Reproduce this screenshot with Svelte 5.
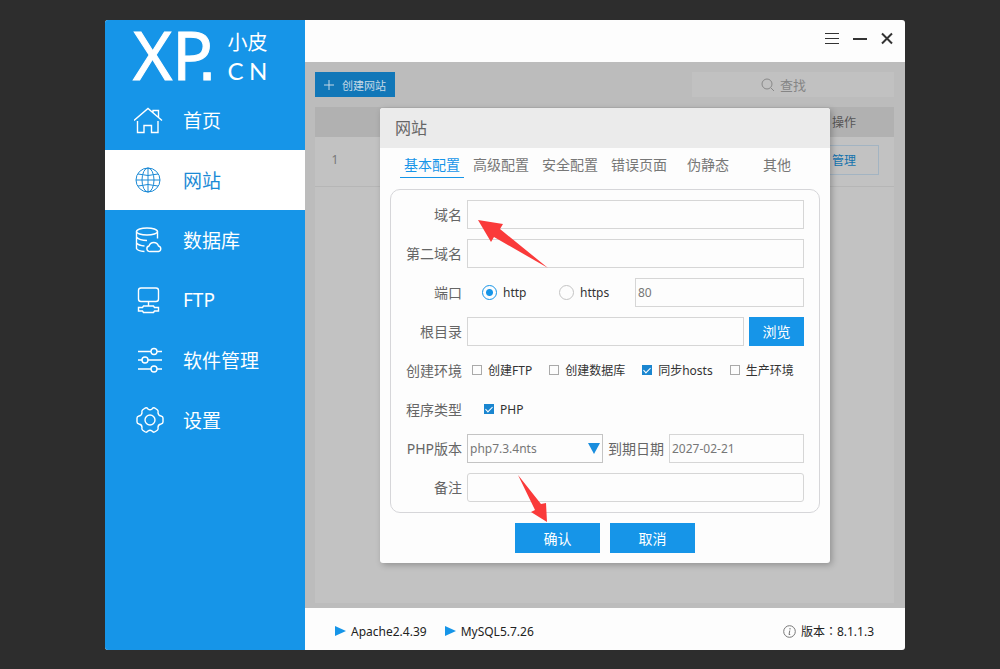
<script lang="ts">
  let active = "site";
  let activeTab = "基本配置";

  let domain = "";
  let domain2 = "";
  let protocol = "http";
  let port = "80";
  let root = "";
  let php = true;
  let version = "php7.3.4nts";
  let expires = "2027-02-21";
  let remark = "";

  const menu = [
    { id: "home", text: "首页" },
    { id: "site", text: "网站" },
    { id: "db", text: "数据库" },
    { id: "ftp", text: "FTP" },
    { id: "soft", text: "软件管理" },
    { id: "setting", text: "设置" },
  ];

  const tabs = ["基本配置", "高级配置", "安全配置", "错误页面", "伪静态", "其他"];

  let envs = [
    { text: "创建FTP", checked: false },
    { text: "创建数据库", checked: false },
    { text: "同步hosts", checked: true },
    { text: "生产环境", checked: false },
  ];
</script>

<div class="desktop">
  <div class="window">
    <aside>
      <div class="logo">
        <span class="xp">XP<span class="dot">.</span></span>
        <div class="sub">
          <span class="zh">小皮</span>
          <span class="cn"><span>C</span><span>N</span></span>
        </div>
      </div>
      <nav>
        {#each menu as item}
          <button
            class="item"
            class:active={active === item.id}
            on:click={() => (active = item.id)}
          >
            <svg class="icon" viewBox="0 0 30 30">
              {#if item.id === "home"}
                <path d="M0 15.500 14 3.500 28 15.500M19 7.500V5.500h5.500v7M3.500 16v11.500h6.500v-7h7.500v7h6.500V16" />
              {:else if item.id === "site"}
                <circle cx="14" cy="15" r="12" />
                <ellipse cx="14" cy="15" rx="6" ry="12" />
                <path d="M14 3v24M2 15h24M4 9q10 3 20 0M4 21q10-3 20 0" />
              {:else if item.id === "db"}
                <ellipse cx="13" cy="6.500" rx="10.500" ry="3.500" />
                <path d="M2.500 6.500v17q1 2.500 8 3M23.500 6.500v7M2.500 12q3 3.500 10.500 3.500M2.500 18q2 2.500 8 3M16.500 26.500h8a2.800 2.800 0 0 0 0-5.500 5 5 0 0 0-9.500 0 2.800 2.800 0 0 0 1.500 5.500z" />
              {:else if item.id === "ftp"}
                <rect x="4.500" y="3" width="20" height="13.500" rx="2.500" />
                <path d="M14.500 17v4M4.500 22.500h4l1-1.500h10l1 1.500h4v3.500h-4l-1 1.500h-10l-1-1.500h-4z" />
              {:else if item.id === "soft"}
                <path d="M4 6.500h13M23 6.500h5M4 15h4M14 15h14M4 24h13M23 24h5" />
                <circle cx="20" cy="6.500" r="3" />
                <circle cx="11" cy="15" r="3" />
                <circle cx="20" cy="24" r="3" />
              {:else}
                <circle cx="16" cy="15" r="5" />
                <path d="M10.500 3.500q2-1.500 3.500.500 2 1.500 4 0 1.500-2 3.500-.500l2 1.500q1 1 .500 2.500 0 3 3 3.500 2 .500 2 2v4q0 1.500-2 2-3 .500-3 3.500.500 1.500-.500 2.500l-2 1.500q-2 1.500-3.500-.500-2-1.500-4 0-1.500 2-3.500.500l-2-1.500q-1-1-.500-2.500 0-3-3-3.500-2-.500-2-2v-4q0-1.500 2-2 3-.500 3-3.500-.500-1.500.500-2.500z" />
              {/if}
            </svg>
            <span>{item.text}</span>
          </button>
        {/each}
      </nav>
    </aside>

    <div class="right">
      <header>
        <button aria-label="菜单">
          <svg width="14" height="13" viewBox="0 0 14 13">
            <path d="M0 1.500h14M0 6.500h14M0 11.500h14" />
          </svg>
        </button>
        <button aria-label="最小化">
          <svg width="14" height="13" viewBox="0 0 14 13">
            <path class="bold" d="M0 7h14" />
          </svg>
        </button>
        <button aria-label="关闭">
          <svg width="12" height="13" viewBox="0 0 12 13">
            <path class="bold" d="M1 1.500 11 11.500M11 1.500 1 11.500" />
          </svg>
        </button>
      </header>

      <main>
        <div class="toolbar">
          <button class="create">
            <svg width="10" height="10" viewBox="0 0 10 10">
              <path d="M0 5h10M5 0v10" />
            </svg>
            创建网站
          </button>
          <label class="search">
            <svg width="14" height="14" viewBox="0 0 14 14">
              <circle cx="6" cy="6" r="5" />
              <path d="M10 10l3 3" />
            </svg>
            <input type="text" placeholder="查找" aria-label="查找" />
          </label>
        </div>
        <div class="list">
          <table>
            <thead>
              <tr><th class="num"></th><th></th><th class="op">操作</th></tr>
            </thead>
            <tbody>
              <tr>
                <td>1</td>
                <td></td>
                <td><button class="manage">管理</button></td>
              </tr>
            </tbody>
          </table>
        </div>

        <div class="mask">
          <div class="modal" role="dialog" aria-label="网站">
            <h2>网站</h2>
            <div class="tabs">
              {#each tabs as tab}
                <button
                  class:current={activeTab === tab}
                  on:click={() => (activeTab = tab)}>{tab}</button
                >
              {/each}
            </div>

            <form on:submit|preventDefault>
              <div class="fields">
                <div class="row">
                  <label class="name" for="domain">域名</label>
                  <input class="text" id="domain" type="text" bind:value={domain} />
                </div>
                <div class="row">
                  <label class="name" for="domain2">第二域名</label>
                  <input class="text" id="domain2" type="text" bind:value={domain2} />
                </div>
                <div class="row">
                  <label class="name" for="port">端口</label>
                  <div class="radios">
                    <label>
                      <input type="radio" value="http" bind:group={protocol} />
                      http
                    </label>
                    <label>
                      <input type="radio" value="https" bind:group={protocol} />
                      https
                    </label>
                  </div>
                  <input class="text" id="port" type="text" bind:value={port} />
                </div>
                <div class="row">
                  <label class="name" for="root">根目录</label>
                  <input class="text" id="root" type="text" bind:value={root} />
                  <button type="button" class="primary browse">浏览</button>
                </div>
                <div class="row">
                  <span class="name">创建环境</span>
                  <div class="checks">
                    {#each envs as env}
                      <label>
                        <input type="checkbox" bind:checked={env.checked} />
                        {env.text}
                      </label>
                    {/each}
                  </div>
                </div>
                <div class="row">
                  <span class="name">程序类型</span>
                  <div class="checks types">
                    <label>
                      <input type="checkbox" bind:checked={php} />
                      PHP
                    </label>
                  </div>
                </div>
                <div class="row">
                  <label class="name" for="version">PHP版本</label>
                  <div class="select">
                    <select id="version" bind:value={version}>
                      <option>php7.3.4nts</option>
                    </select>
                  </div>
                  <label class="date" for="expires">到期日期</label>
                  <input class="text" id="expires" type="text" bind:value={expires} />
                </div>
                <div class="row">
                  <label class="name" for="remark">备注</label>
                  <input class="text round" id="remark" type="text" bind:value={remark} />
                </div>
              </div>
              <div class="actions">
                <button type="submit" class="primary">确认</button>
                <button type="button" class="primary">取消</button>
              </div>
            </form>

            <svg class="arrows" width="450" height="455" viewBox="0 0 450 455">
              <path d="M98 112 123 116 120 121 168 160 114 129 111 134z" />
              <path d="M138 367 161 396 166 395 167 414 151 404 155 402z" />
            </svg>
          </div>
        </div>
      </main>

      <footer>
        <span class="service">Apache2.4.39</span>
        <span class="service">MySQL5.7.26</span>
        <span class="version">
          <svg width="13" height="13" viewBox="0 0 13 13">
            <circle cx="6.500" cy="6.500" r="5.800" />
            <path d="M7 3v1.500M6.800 5.500 6 9.500h1.200" />
          </svg>
          版本：8.1.1.3
        </span>
      </footer>
    </div>
  </div>
</div>

<style>
  :global(body) {
    background: #2d2d2d;
  }

  .desktop {
    min-height: 100vh;
    box-sizing: border-box;
    padding: 20px 95px 19px 105px;
    display: flex;

    font-family: "Noto Sans", "Noto Sans CJK SC", sans-serif;
    font-size: 12px;
  }

  .desktop * {
    box-sizing: border-box;
  }

  button,
  input,
  select {
    font: inherit;
    color: inherit;
    margin: 0;
    padding: 0;
    border: none;
    background: none;
  }

  svg {
    fill: none;
    stroke: currentColor;
    flex: none;
  }

  .window {
    flex: 1;
    display: flex;
    border-radius: 3px;
    background: #fdfdfd;
  }

  aside {
    width: 200px;
    flex: none;
    border-radius: 3px 0 0 3px;
    background: #1695e8;
    color: white;
  }

  .logo {
    height: 70px;
    padding-left: 28px;
    display: flex;
    align-items: center;
    gap: 11px;
  }

  .xp {
    font-family: "Noto Sans", sans-serif;
    font-size: 67px;
    line-height: 70px;
    -webkit-text-stroke: 1px white;
  }

  .dot {
    margin-left: -15px;
    font-family: "Liberation Sans", sans-serif;
  }

  .sub {
    width: 40px;
    padding-top: 4px;
    display: flex;
    flex-direction: column;
    font-size: 20px;
    line-height: 28px;
  }

  .cn {
    display: flex;
    justify-content: space-between;
    font-family: Lato, sans-serif;
    font-size: 24px;
  }

  .item {
    width: 100%;
    height: 60px;
    padding-left: 29px;
    display: flex;
    align-items: center;
    gap: 19px;
    font-size: 19px;
  }

  .item.active {
    background: white;
    color: #1b8ad6;
  }

  .icon {
    width: 30px;
    height: 30px;
    stroke-width: 1.4;
  }

  .active .icon {
    stroke-width: 1;
  }

  .right {
    flex: 1;
    min-width: 0;
    display: flex;
    flex-direction: column;
  }

  header {
    height: 42px;
    padding: 0 12px 5px;
    display: flex;
    align-items: center;
    justify-content: flex-end;
    gap: 14px;
    color: #333;
  }

  header button {
    display: flex;
  }

  header .bold {
    stroke-width: 2;
  }

  main {
    flex: 1;
    position: relative;
    padding: 10px 11px 5px 10px;
    display: flex;
    flex-direction: column;
    gap: 10px;
    background: #bcbcbc;
  }

  .toolbar {
    display: flex;
    justify-content: space-between;
  }

  .create {
    width: 80px;
    height: 25px;
    display: flex;
    align-items: center;
    justify-content: center;
    gap: 8px;
    background: #1177b8;
    color: #c5d9e6;
    font-size: 11px;
  }

  .search {
    width: 202px;
    height: 25px;
    padding-left: 69px;
    display: flex;
    align-items: center;
    gap: 5px;
    background: #c1c1c1;
    color: #888;
    font-size: 13px;
  }

  .search input {
    width: 100px;
  }

  .search input::placeholder {
    color: #858585;
    opacity: 1;
  }

  .list {
    flex: 1;
    background: #c2c2c2;
  }

  table {
    width: 100%;
    border-collapse: collapse;
    table-layout: fixed;
    text-align: center;
    color: #777;
  }

  th,
  td {
    padding: 0;
  }

  th {
    height: 30px;
    background: #b1b1b1;
    color: #555;
    font-weight: normal;
  }

  td {
    height: 49px;
    padding-bottom: 3px;
    border-bottom: 1px solid #b6b6b6;
  }

  .num {
    width: 40px;
  }

  .op {
    width: 100px;
  }

  .manage {
    width: 70px;
    height: 30px;
    border: 1px solid #a3b4c2;
    color: #1472ad;
  }

  .mask {
    position: absolute;
    inset: 0;
    display: flex;
    align-items: center;
    justify-content: center;
  }

  .modal {
    position: relative;
    width: 450px;
    border-radius: 3px;
    background: #fdfdfd;
    color: #666;
    font-size: 14px;
    box-shadow: 2px 2px 6px rgba(0, 0, 0, 0.25);
  }

  h2 {
    margin: 0;
    padding-left: 15px;
    border-radius: 3px 3px 0 0;
    background: #ebebeb;
    font-size: 16px;
    font-weight: normal;
    line-height: 40px;
  }

  .tabs {
    padding: 0 20px 11px;
    display: flex;
    gap: 5px;
  }

  .tabs button {
    width: 64px;
    height: 30px;
    padding-top: 4px;
    border-bottom: 1px solid transparent;
    line-height: 25px;
    color: #777;
    white-space: nowrap;
  }

  .tabs .current {
    color: #1695e8;
    border-color: #1695e8;
  }

  .fields {
    margin: 0 10px;
    padding: 10px 15px 10px 9px;
    border: 1px solid #d6d6d9;
    border-radius: 10px;
    display: flex;
    flex-direction: column;
    gap: 10px;
  }

  .row {
    height: 29px;
    display: flex;
    align-items: center;
    gap: 5px;
  }

  .name {
    width: 62px;
    flex: none;
    text-align: right;
    white-space: nowrap;
  }

  .text {
    flex: 1;
    min-width: 0;
    height: 29px;
    padding: 0 2px;
    border: 1px solid #d6d6d6;
    color: #777;
    font-size: 12px;
  }

  .text.round {
    border-radius: 3px;
  }

  .radios {
    width: 163px;
    flex: none;
    padding-left: 15px;
    display: flex;
    color: #333;
    font-size: 12px;
  }

  .radios label {
    width: 77px;
    flex: none;
    display: flex;
    align-items: center;
    gap: 6px;
  }

  input[type="radio"] {
    appearance: none;
    width: 15px;
    height: 15px;
    border: 1px solid #c4c4c4;
    border-radius: 50%;
  }

  input[type="radio"]:checked {
    border-color: #1695e8;
    background: radial-gradient(#1695e8 3px, transparent 4px);
  }

  .checks {
    padding-left: 5px;
    display: flex;
    gap: 17px;
    color: #333;
    font-size: 12px;
    white-space: nowrap;
  }

  .checks.types {
    padding-left: 17px;
  }

  .checks label {
    display: flex;
    align-items: center;
    gap: 6px;
  }

  input[type="checkbox"] {
    appearance: none;
    width: 10px;
    height: 10px;
    border: 1px solid #aaa;
    display: flex;
    justify-content: center;
  }

  input[type="checkbox"]:checked {
    border-color: #1a86d0;
    background: #1a86d0;
  }

  input[type="checkbox"]:checked::after {
    content: "";
    width: 3px;
    height: 6px;
    border: solid white;
    border-width: 0 1px 1px 0;
    transform: rotate(45deg);
  }

  .primary {
    width: 85px;
    height: 30px;
    background: #1695e8;
    color: white;
  }

  .primary.browse {
    width: 55px;
    height: 29px;
  }

  .select {
    position: relative;
    width: 136px;
  }

  .select select {
    appearance: none;
    width: 100%;
    height: 29px;
    padding-left: 2px;
    display: block;
    border: 1px solid #c4c4c4;
    font-size: 12px;
    color: #777;
  }

  /* drop-down triangle */
  .select::after {
    content: "";
    position: absolute;
    top: 9px;
    right: 3px;
    border: 6px solid transparent;
    border-top: 11px solid #1a8ede;
    border-bottom: none;
    pointer-events: none;
  }

  .date {
    white-space: nowrap;
  }

  .actions {
    padding: 10px;
    display: flex;
    justify-content: center;
    gap: 10px;
  }

  .arrows {
    position: absolute;
    top: 0;
    left: 0;
    stroke: none;
    fill: #fa3a3a;
    pointer-events: none;
  }

  footer {
    height: 42px;
    padding: 4px 31px 0 30px;
    display: flex;
    align-items: center;
    gap: 18px;
    color: #222;
  }

  .service {
    display: flex;
    align-items: center;
    gap: 5px;
  }

  .service::before {
    content: "";
    border: 5px solid transparent;
    border-left: 11px solid #1695e8;
    border-right: none;
  }

  /* the TC face centres the full-width colon */
  .version {
    margin-left: auto;
    display: flex;
    align-items: center;
    gap: 5px;
    font-family: "Noto Sans", "Noto Sans CJK TC", sans-serif;
  }

  .version svg {
    color: #777;
  }
</style>
